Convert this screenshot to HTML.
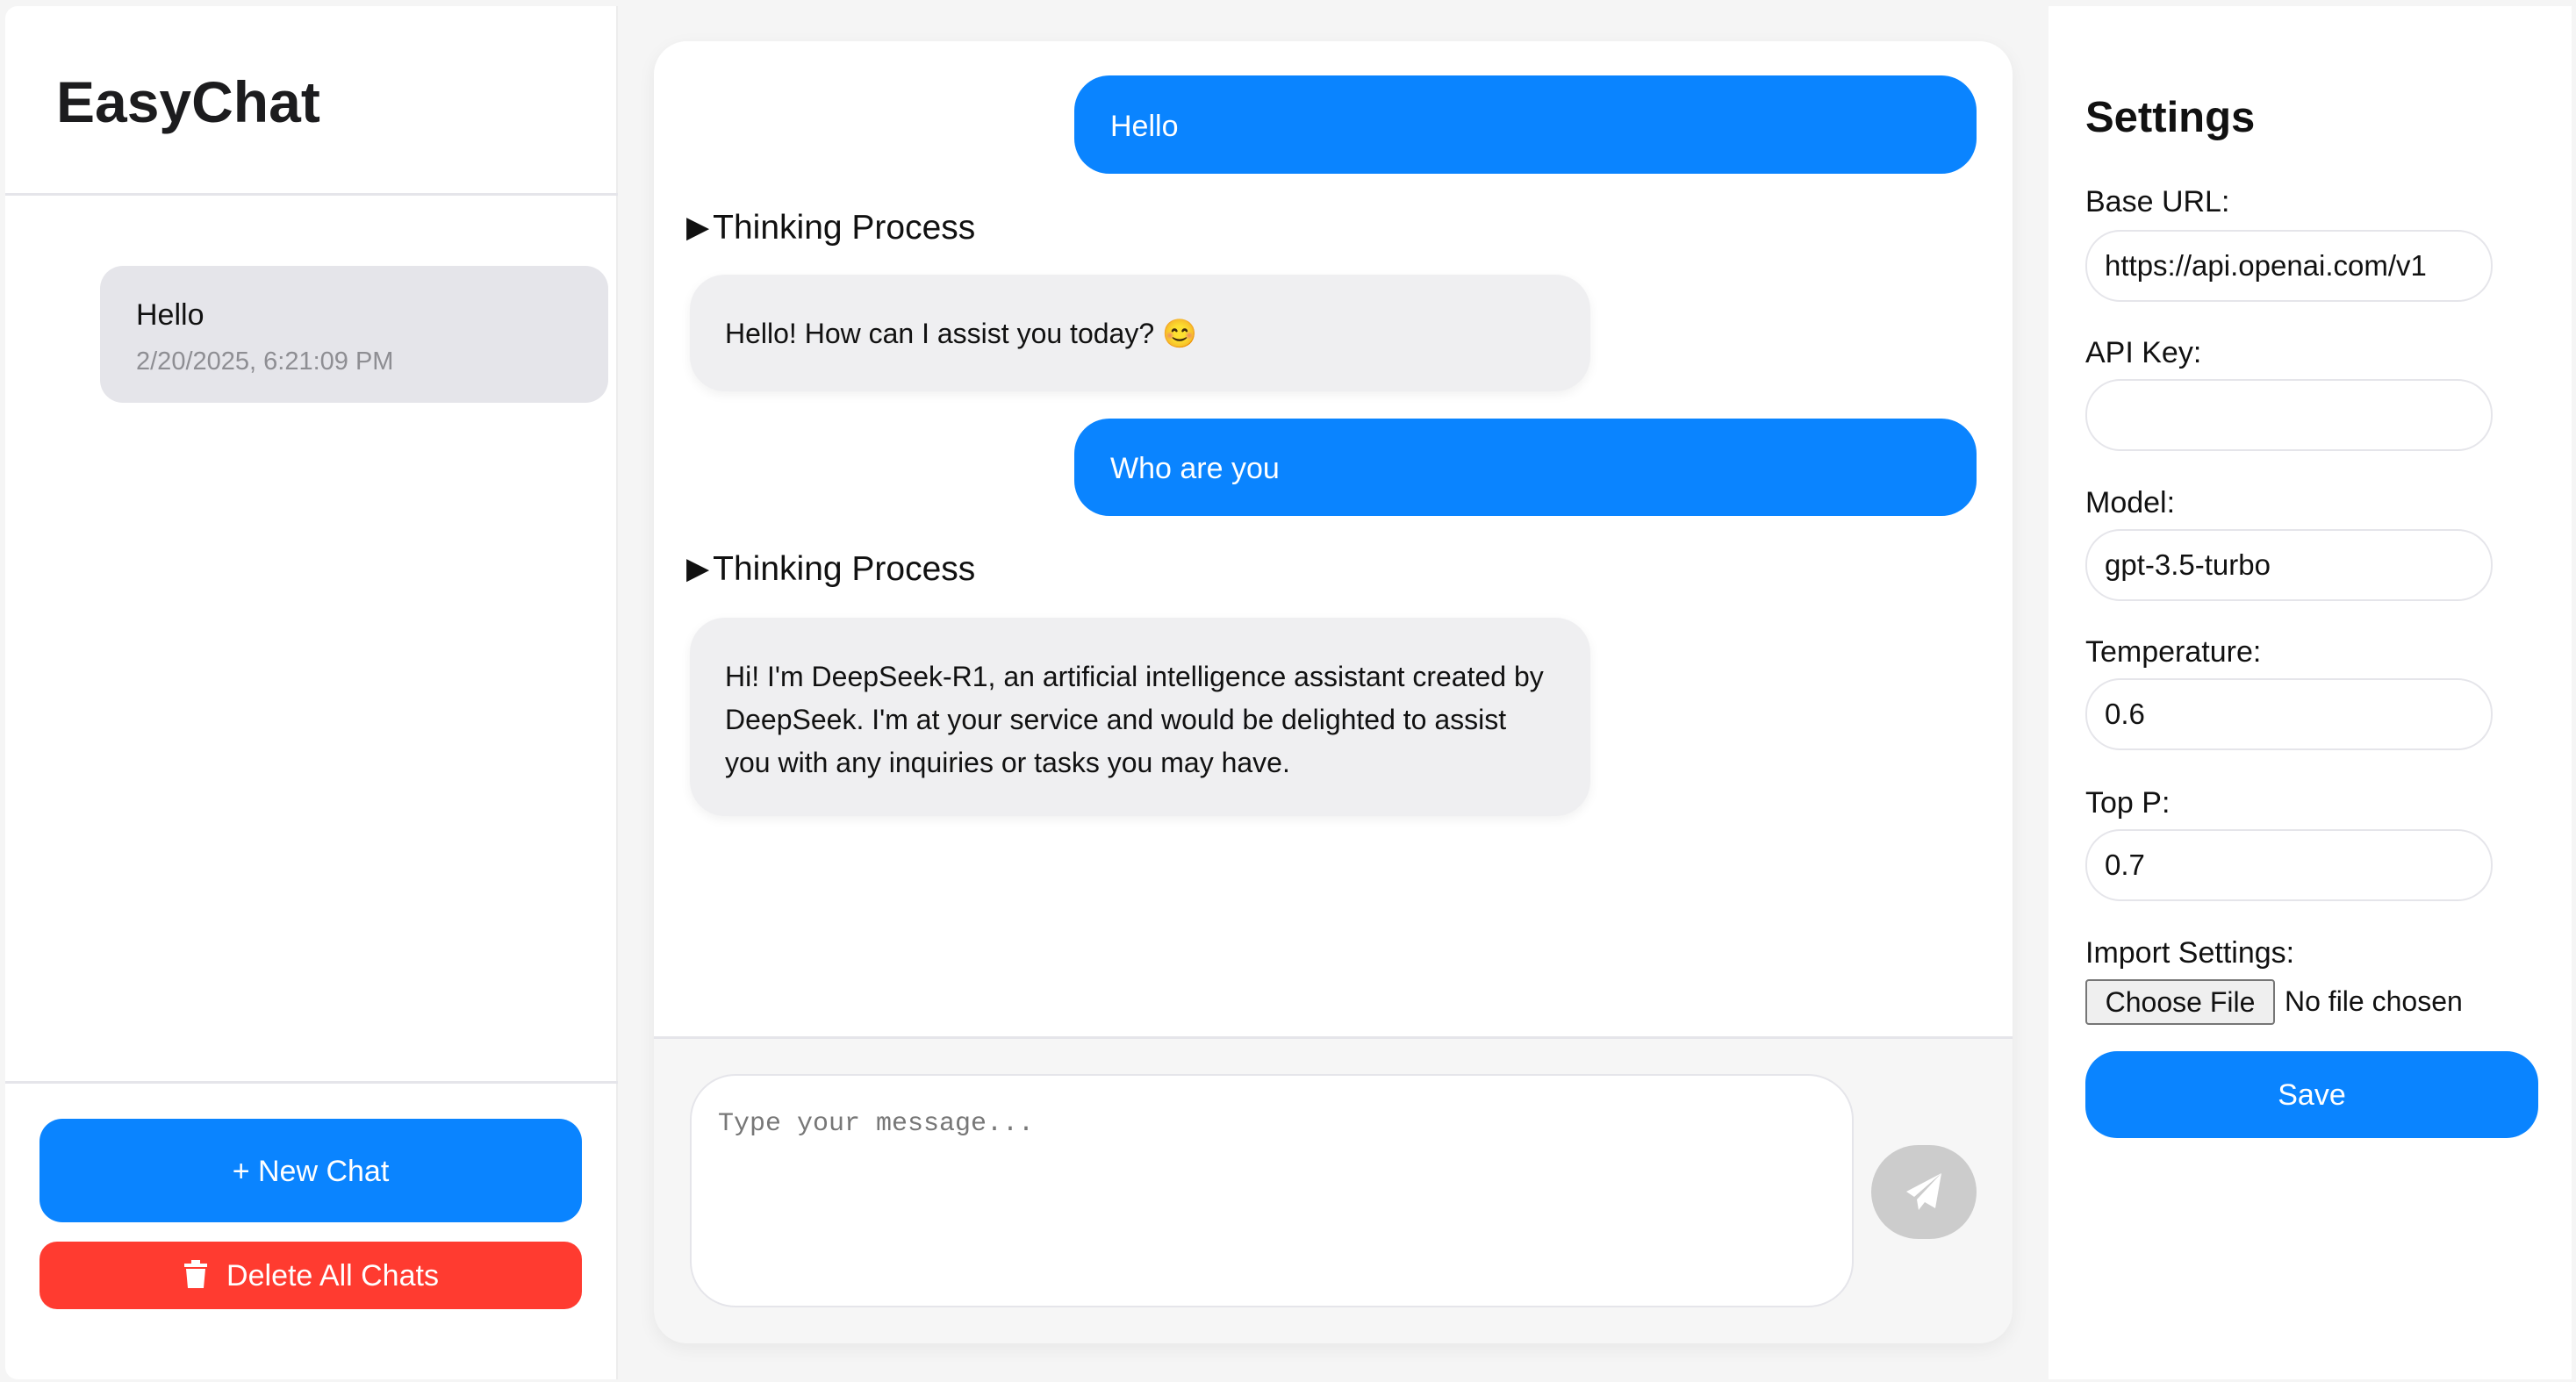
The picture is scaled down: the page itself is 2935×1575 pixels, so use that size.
<!DOCTYPE html>
<html><head><meta charset="utf-8"><style>
*{box-sizing:border-box;margin:0;padding:0}
body{width:2935px;height:1575px;background:#f5f5f5;font-family:"Liberation Sans",sans-serif;color:#111;position:relative;overflow:hidden}
.a{position:absolute}
.side{left:6px;top:7px;width:698px;height:1565px;background:#fff;border-radius:14px 0 0 14px;border-right:2px solid #ececec}
.set{left:2334px;top:7px;width:596px;height:1565px;background:#fff}
.lbl{font-size:34px;color:#111;left:2376px}
.inp{left:2376px;width:464px;height:82px;border:2px solid #e5e5ea;border-radius:40px;font-size:33px;padding:0 0 0 20px;line-height:78px}
.tp{font-size:39px}
.tp span{font-size:34px;vertical-align:2px;margin-right:4px}
</style></head><body>
<div class="a side"></div>
<div class="a" style="left:64px;top:78px;font-size:66px;font-weight:bold;color:#1c1c1e">EasyChat</div>
<div class="a" style="left:6px;top:220px;width:698px;height:3px;background:#e5e5ea"></div>
<div class="a" style="left:114px;top:303px;width:579px;height:156px;background:#e5e5ea;border-radius:26px"></div>
<div class="a" style="left:155px;top:340px;font-size:34px;color:#111">Hello</div>
<div class="a" style="left:155px;top:396px;font-size:29px;color:#8e8e93">2/20/2025, 6:21:09 PM</div>
<div class="a" style="left:6px;top:1232px;width:698px;height:3px;background:#e5e5ea"></div>
<div class="a" style="left:45px;top:1275px;width:618px;height:118px;background:#0a84ff;border-radius:26px;color:#fff;font-size:34px;text-align:center;line-height:120px">+ New Chat</div>
<div class="a" style="left:45px;top:1415px;width:618px;height:77px;background:#ff3b30;border-radius:20px;color:#fff;font-size:34px;text-align:center;line-height:79px"><svg width="30" height="34" viewBox="0 0 30 34" style="vertical-align:-4px;margin-right:20px"><rect x="2" y="5" width="26" height="4" fill="#fff"/><rect x="10" y="1" width="10" height="5" fill="#fff"/><path d="M4 11h22l-2 22H6z" fill="#fff"/></svg>Delete All Chats</div>

<div class="a" style="left:745px;top:47px;width:1548px;height:1484px;background:#f6f6f6;border-radius:38px;box-shadow:0 6px 20px rgba(0,0,0,.06);overflow:hidden">
  <div class="a" style="left:0;top:0;width:1548px;height:1134px;background:#fff"></div>
  <div class="a" style="left:0;top:1134px;width:1548px;height:3px;background:#e5e5ea"></div>
</div>
<div class="a" style="left:1224px;top:86px;width:1028px;height:112px;background:#0a84ff;border-radius:40px;color:#fff;font-size:34px;line-height:116px;padding-left:41px">Hello</div>
<div class="a tp" style="left:782px;top:238px"><span>▶</span>Thinking Process</div>
<div class="a" style="left:786px;top:313px;width:1026px;height:133px;background:#efeff1;border-radius:40px;box-shadow:0 4px 12px rgba(0,0,0,.06);font-size:32px;line-height:135px;padding-left:40px">Hello! How can I assist you today? <span style="color:#f6a623">😊</span></div>
<div class="a" style="left:1224px;top:477px;width:1028px;height:111px;background:#0a84ff;border-radius:40px;color:#fff;font-size:34px;line-height:115px;padding-left:41px">Who are you</div>
<div class="a tp" style="left:782px;top:627px"><span>▶</span>Thinking Process</div>
<div class="a" style="left:786px;top:704px;width:1026px;height:226px;background:#efeff1;border-radius:40px;box-shadow:0 4px 12px rgba(0,0,0,.06);font-size:32px;line-height:49px;padding:43px 40px 0 40px">Hi! I'm DeepSeek-R1, an artificial intelligence assistant created by DeepSeek. I'm at your service and would be delighted to assist you with any inquiries or tasks you may have.</div>
<div class="a" style="left:786px;top:1224px;width:1326px;height:266px;background:#fff;border:2px solid #e5e5ea;border-radius:52px;font-family:'Liberation Mono',monospace;font-size:30px;color:#777;padding:38px 30px">Type your message...</div>
<div class="a" style="left:2132px;top:1305px;width:120px;height:107px;background:#ccc;border-radius:54px"></div>
<svg class="a" style="left:2168px;top:1334px" width="48" height="48" viewBox="0 0 48 48"><path d="M44 3L4 24l9 6z M44 3L16 33l2 12 7-9 12 7z" fill="#fff"/></svg>

<div class="a set"></div>
<div class="a" style="left:2376px;top:106px;font-size:49px;font-weight:bold;color:#111">Settings</div>
<div class="a lbl" style="top:211px">Base URL:</div>
<div class="a inp" style="top:262px">https://api.openai.com/v1</div>
<div class="a lbl" style="top:383px">API Key:</div>
<div class="a inp" style="top:432px"></div>
<div class="a lbl" style="top:554px">Model:</div>
<div class="a inp" style="top:603px">gpt-3.5-turbo</div>
<div class="a lbl" style="top:724px">Temperature:</div>
<div class="a inp" style="top:773px">0.6</div>
<div class="a lbl" style="top:896px">Top P:</div>
<div class="a inp" style="top:945px">0.7</div>
<div class="a lbl" style="top:1067px">Import Settings:</div>
<div class="a" style="left:2376px;top:1116px;width:216px;height:52px;background:#efefef;border:2px solid #767676;border-radius:4px;font-size:32px;text-align:center;line-height:48px">Choose File</div>
<div class="a" style="left:2603px;top:1123px;font-size:32px">No file chosen</div>
<div class="a" style="left:2376px;top:1198px;width:516px;height:99px;background:#0a84ff;border-radius:36px;color:#fff;font-size:34px;text-align:center;line-height:101px">Save</div>
</body></html>
